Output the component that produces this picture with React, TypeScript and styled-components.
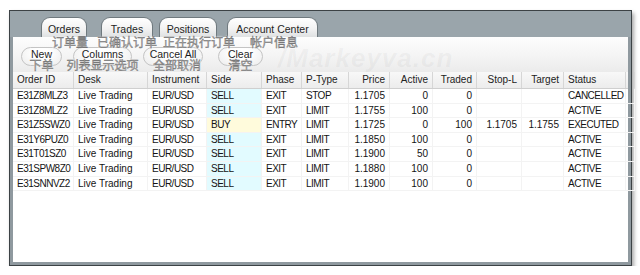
import React from "react";
import styled, { createGlobalStyle } from "styled-components";

const Global = createGlobalStyle`
  html, body { margin: 0; padding: 0; background: #ffffff; }
  body { font-family: "Liberation Sans", Arial, sans-serif; }
`;

const COLS = "61px 74px 59px 55px 40px 47px 41px 43px 44px 45px 42px 62px 1fr";

const Window = styled.div`
  position: relative;
  box-sizing: border-box;
  margin: 10px 0 0 9px;
  width: 623px;
  height: 256px;
  border: 1px solid #3c4245;
  background: #8f999f;
  padding: 0 3px 3px 3px;
  display: flex;
  flex-direction: column;
  box-shadow: 2px 3px 4px rgba(0, 0, 0, 0.35);
`;

const TabBar = styled.div`
  height: 26px;
  margin: 0 -3px;
  background: #9aa5ab;
  display: flex;
  align-items: flex-end;
  padding-left: 31px;
  flex-shrink: 0;
`;

const Tab = styled.div<{ $w: number; $ml: number }>`
  box-sizing: border-box;
  width: ${(p) => p.$w}px;
  margin-left: ${(p) => p.$ml}px;
  height: 20px;
  border: 1px solid #6f797e;
  border-bottom: none;
  border-radius: 9px 9px 0 0;
  background: linear-gradient(#ffffff, #f3f3f3 55%, #dfe1e2);
  font-size: 10.5px;
  color: #1e1e1e;
  display: flex;
  align-items: center;
  justify-content: center;
  padding-top: 2px;
`;

const Panel = styled.div`
  height: 35px;
  flex-shrink: 0;
  background: linear-gradient(#fdfdfd, #f5f5f5 50%, #ebebeb);
  display: flex;
  flex-direction: column;
`;

const CaptionRow = styled.div`
  display: flex;
  height: 11px;
  margin-top: -1px;
  padding-left: 39px;
`;

const Caption = styled.span<{ $ml?: number }>`
  margin-left: ${(p) => p.$ml ?? 0}px;
  font-family: "Noto Sans CJK SC", "Liberation Sans", sans-serif;
  font-size: 12px;
  line-height: 12px;
  font-weight: 400;
  color: #a9a9a9;
  -webkit-text-stroke: 0.35px #6a6a6a;
  text-shadow: 0 0 2px #ffffff, 0 0 1px #ffffff;
  white-space: nowrap;
  position: relative;
  z-index: 2;
`;

const ButtonRow = styled.div`
  display: flex;
  padding-left: 8px;
  height: 24px;
`;

const ButtonGroup = styled.div<{ $w: number; $ml: number }>`
  width: ${(p) => p.$w}px;
  margin-left: ${(p) => p.$ml}px;
  display: flex;
  flex-direction: column;
  align-items: center;
`;

const Pill = styled.div`
  box-sizing: border-box;
  width: 100%;
  height: 19px;
  border: 1px solid #c4c4c4;
  border-radius: 10px;
  background: radial-gradient(ellipse at 50% 30%, #ffffff 30%, #ececec 100%);
  font-size: 10.5px;
  line-height: 11px;
  color: #1e1e1e;
  text-align: center;
  padding-top: 1px;
  white-space: nowrap;
`;

const PillCaption = styled(Caption)<{ $dx?: number }>`
  margin-top: -7px;
  left: ${(p) => p.$dx ?? 0}px;
`;

const Table = styled.div`
  flex: 1;
  background: #ffffff;
  display: flex;
  flex-direction: column;
`;

const HeaderRow = styled.div`
  display: grid;
  grid-template-columns: ${COLS};
  height: 17px;
  box-sizing: border-box;
  background: linear-gradient(#f8f8f8, #ececec);
  border-bottom: 1px solid #cfcfcf;
`;

const HeadCell = styled.div<{ $right?: boolean }>`
  font-size: 10px;
  line-height: 16px;
  color: #222;
  padding: 0 4px;
  text-align: ${(p) => (p.$right ? "right" : "left")};
  border-right: 1px solid #d6d6d6;
  white-space: nowrap;
  overflow: hidden;
`;

const DataRow = styled.div`
  display: grid;
  grid-template-columns: ${COLS};
  height: 14.6px;
`;

const Cell = styled.div<{ $right?: boolean; $caps?: boolean; $bg?: string }>`
  font-size: 10px;
  line-height: 14.6px;
  color: #141414;
  padding: 0 4px;
  text-align: ${(p) => (p.$right ? "right" : "left")};
  letter-spacing: ${(p) => (p.$caps ? "-0.5px" : "0")};
  background: ${(p) => p.$bg ?? "transparent"};
  border-right: 1px solid #f3f3f3;
  border-bottom: 1px solid #f3f3f3;
  box-sizing: border-box;
  white-space: nowrap;
  overflow: hidden;
`;

const Watermark = styled.div`
  position: absolute;
  left: 268px;
  top: 33px;
  font-family: "Liberation Sans", sans-serif;
  font-style: italic;
  font-weight: 700;
  font-size: 26px;
  line-height: 28px;
  letter-spacing: 1px;
  color: rgba(120, 120, 120, 0.07);
  pointer-events: none;
  z-index: 1;
`;

const tabs = [
  { label: "Orders", w: 46, ml: 0 },
  { label: "Trades", w: 52, ml: 14 },
  { label: "Positions", w: 58, ml: 6 },
  { label: "Account Center", w: 91, ml: 10 },
];

const captions = [
  { text: "订单量", ml: 0 },
  { text: "已确认订单", ml: 9 },
  { text: "正在执行订单", ml: 6 },
  { text: "帐户信息", ml: 15 },
];

const buttons = [
  { label: "New", cn: "下单", w: 41, ml: 0, dx: 0 },
  { label: "Columns", cn: "列表显示选项", w: 59, ml: 11, dx: 0 },
  { label: "Cancel All", cn: "全部取消", w: 60, ml: 11, dx: 4 },
  { label: "Clear", cn: "清空", w: 45, ml: 15, dx: 0 },
];

type Col = { key: string; title: string; right?: boolean; caps?: boolean };
const columns: Col[] = [
  { key: "id", title: "Order ID", caps: true },
  { key: "desk", title: "Desk" },
  { key: "inst", title: "Instrument", caps: true },
  { key: "side", title: "Side", caps: true },
  { key: "phase", title: "Phase", caps: true },
  { key: "ptype", title: "P-Type", caps: true },
  { key: "price", title: "Price", right: true },
  { key: "active", title: "Active", right: true },
  { key: "traded", title: "Traded", right: true },
  { key: "stop", title: "Stop-L", right: true },
  { key: "target", title: "Target", right: true },
  { key: "status", title: "Status", caps: true },
];

type Row = Record<string, string>;
const rows: Row[] = [
  { id: "E31Z8MLZ3", desk: "Live Trading", inst: "EUR/USD", side: "SELL", phase: "EXIT", ptype: "STOP", price: "1.1705", active: "0", traded: "0", stop: "", target: "", status: "CANCELLED" },
  { id: "E31Z8MLZ2", desk: "Live Trading", inst: "EUR/USD", side: "SELL", phase: "EXIT", ptype: "LIMIT", price: "1.1755", active: "100", traded: "0", stop: "", target: "", status: "ACTIVE" },
  { id: "E31Z5SWZ0", desk: "Live Trading", inst: "EUR/USD", side: "BUY", phase: "ENTRY", ptype: "LIMIT", price: "1.1725", active: "0", traded: "100", stop: "1.1705", target: "1.1755", status: "EXECUTED" },
  { id: "E31Y6PUZ0", desk: "Live Trading", inst: "EUR/USD", side: "SELL", phase: "EXIT", ptype: "LIMIT", price: "1.1850", active: "100", traded: "0", stop: "", target: "", status: "ACTIVE" },
  { id: "E31T01SZ0", desk: "Live Trading", inst: "EUR/USD", side: "SELL", phase: "EXIT", ptype: "LIMIT", price: "1.1900", active: "50", traded: "0", stop: "", target: "", status: "ACTIVE" },
  { id: "E31SPW8Z0", desk: "Live Trading", inst: "EUR/USD", side: "SELL", phase: "EXIT", ptype: "LIMIT", price: "1.1880", active: "100", traded: "0", stop: "", target: "", status: "ACTIVE" },
  { id: "E31SNNVZ2", desk: "Live Trading", inst: "EUR/USD", side: "SELL", phase: "EXIT", ptype: "LIMIT", price: "1.1900", active: "100", traded: "0", stop: "", target: "", status: "ACTIVE" },
];

const sideBg = (v: string) => (v === "BUY" ? "#fffbdc" : "#e2fbff");

export default function App() {
  return (
    <>
      <Global />
      <Window>
        <TabBar>
          {tabs.map((t) => (
            <Tab key={t.label} $w={t.w} $ml={t.ml}>
              {t.label}
            </Tab>
          ))}
        </TabBar>
        <Panel>
          <CaptionRow>
            {captions.map((c) => (
              <Caption key={c.text} $ml={c.ml}>
                {c.text}
              </Caption>
            ))}
          </CaptionRow>
          <ButtonRow>
            {buttons.map((b) => (
              <ButtonGroup key={b.label} $w={b.w} $ml={b.ml}>
                <Pill>{b.label}</Pill>
                <PillCaption $dx={b.dx}>{b.cn}</PillCaption>
              </ButtonGroup>
            ))}
          </ButtonRow>
        </Panel>
        <Table>
          <HeaderRow>
            {columns.map((c) => (
              <HeadCell key={c.key} $right={c.right}>
                {c.title}
              </HeadCell>
            ))}
            <HeadCell />
          </HeaderRow>
          {rows.map((r) => (
            <DataRow key={r.id}>
              {columns.map((c) => (
                <Cell
                  key={c.key}
                  $right={c.right}
                  $caps={c.caps}
                  $bg={c.key === "side" ? sideBg(r.side) : undefined}
                >
                  {r[c.key]}
                </Cell>
              ))}
              <Cell />
            </DataRow>
          ))}
        </Table>
        <Watermark>/Markeyva.cn</Watermark>
      </Window>
    </>
  );
}
